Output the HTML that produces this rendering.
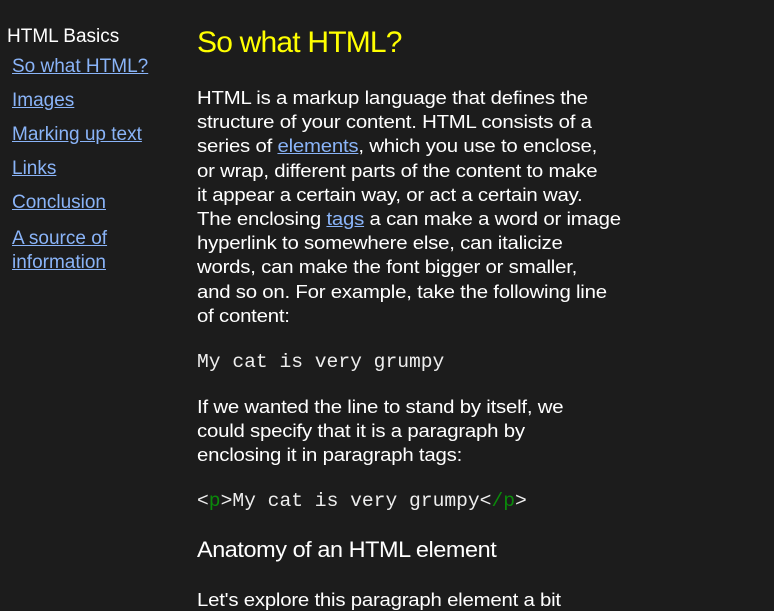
<!DOCTYPE html>
<html><head><style>
html,body{margin:0;padding:0;background:#1c1c1c;width:774px;height:611px;overflow:hidden;}
body{font-family:"Liberation Sans","DejaVu Sans",sans-serif;color:#fff;position:relative;}
.a{position:absolute;white-space:nowrap;transform-origin:0 0;}
a{color:#8ab4f8;text-decoration:underline;}
.side{font-size:19px;}
.p{font-size:18.7px;line-height:24.2px;letter-spacing:-0.2px;transform:scaleX(1.09)}
.m{font-family:"Liberation Mono",monospace;font-size:19px;color:#eee;transform:scaleX(1.033)}
.g{color:#0a8a0a}
</style></head><body>
<div class="a side" style="left:7px;top:26px;">HTML Basics</div>
<div class="a side" style="left:12px;top:56px;"><a>So what HTML?</a></div>
<div class="a side" style="left:12px;top:90px;"><a>Images</a></div>
<div class="a side" style="left:12px;top:124px;"><a>Marking up text</a></div>
<div class="a side" style="left:12px;top:158px;"><a>Links</a></div>
<div class="a side" style="left:12px;top:192px;"><a>Conclusion</a></div>
<div class="a side" style="left:12px;top:227px;line-height:24px"><a>A source of<br>information</a></div>
<div class="a" style="left:197px;top:26px;font-size:30px;color:#ffff00;letter-spacing:-0.8px">So what HTML?</div>
<div class="a p" style="left:197px;top:86px;">HTML is a markup language that defines the<br>structure of your content. HTML consists of a<br>series of <a>elements</a>, which you use to enclose,<br>or wrap, different parts of the content to make<br>it appear a certain way, or act a certain way.<br>The enclosing <a>tags</a> a can make a word or image<br>hyperlink to somewhere else, can italicize<br>words, can make the font bigger or smaller,<br>and so on. For example, take the following line<br>of content:</div>
<div class="a m" style="left:197px;top:351px;">My cat is very grumpy</div>
<div class="a p" style="left:197px;top:395px;">If we wanted the line to stand by itself, we<br>could specify that it is a paragraph by<br>enclosing it in paragraph tags:</div>
<div class="a m" style="left:197px;top:490px;">&lt;<span class="g">p</span>&gt;My cat is very grumpy&lt;<span class="g">/p</span>&gt;</div>
<div class="a" style="left:197px;top:537px;font-size:22px;letter-spacing:-0.4px;transform:scaleX(1.065)">Anatomy of an HTML element</div>
<div class="a p" style="left:197px;top:588px;">Let's explore this paragraph element a bit</div>
</body></html>
